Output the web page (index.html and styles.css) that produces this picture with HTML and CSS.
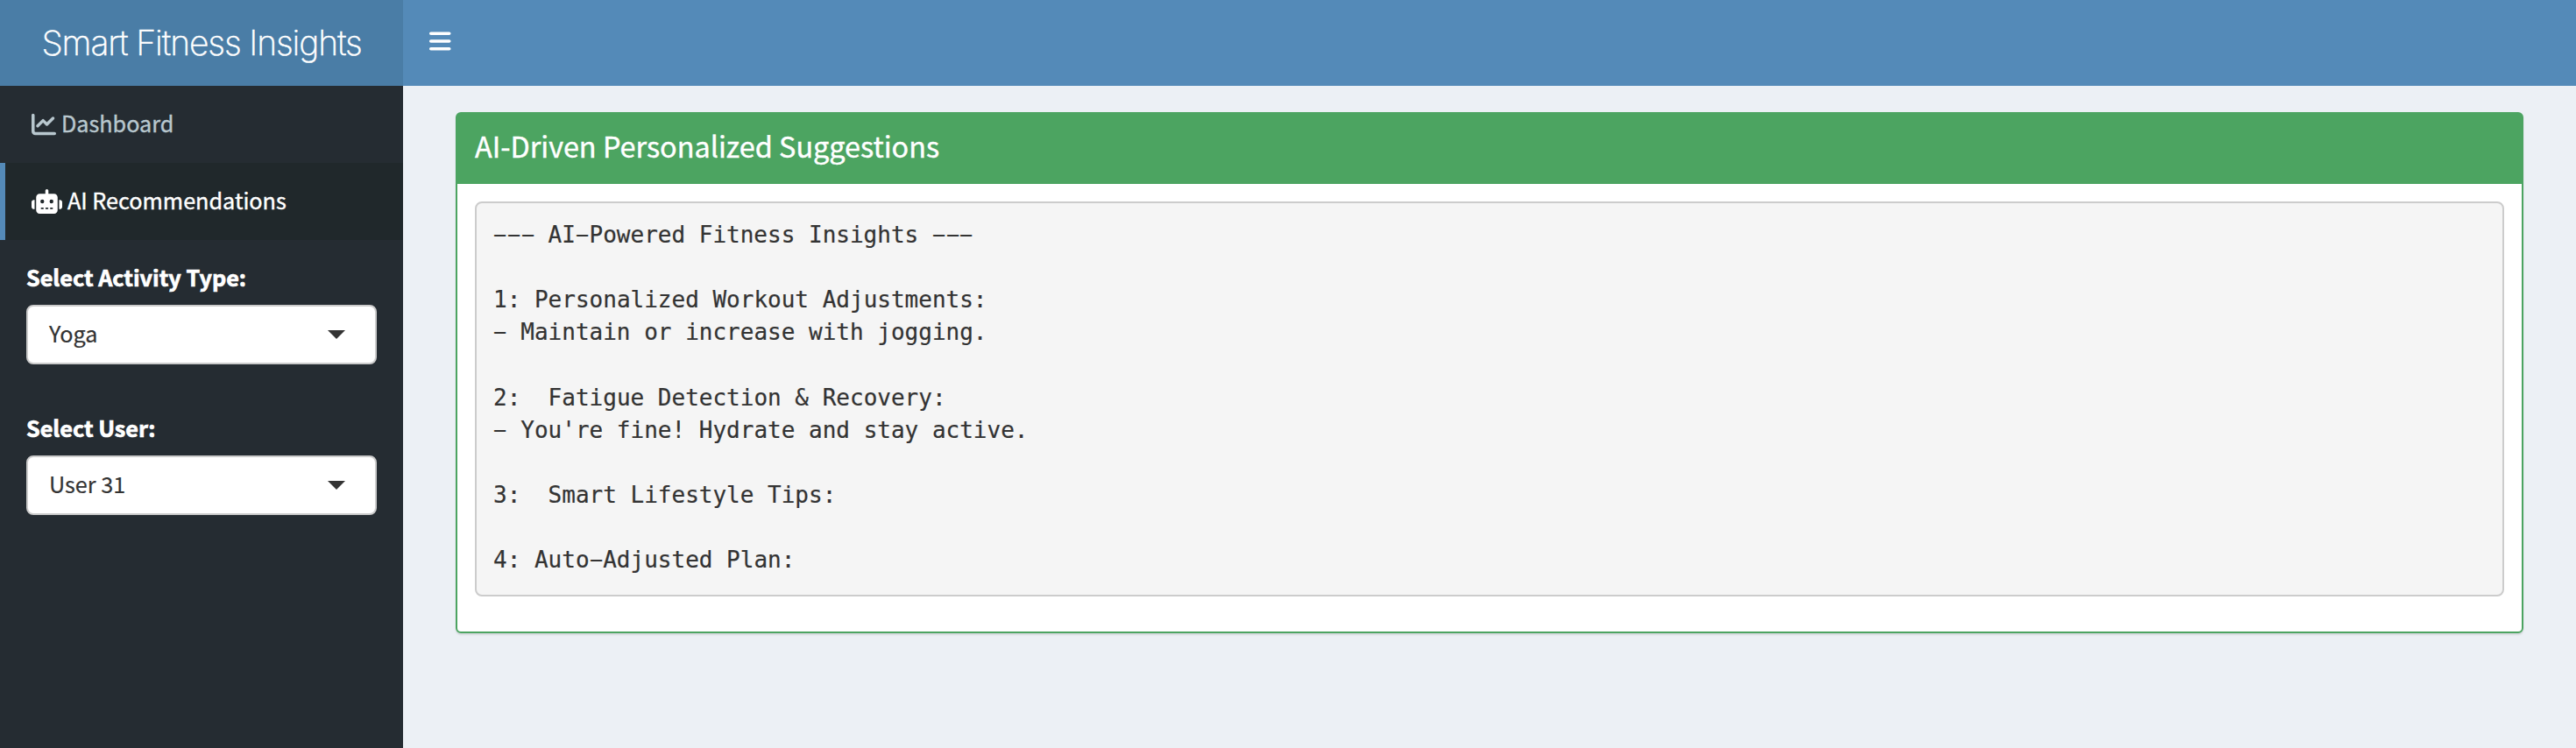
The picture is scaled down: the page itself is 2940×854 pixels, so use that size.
FILE: index.html
```html
<!DOCTYPE html>
<html lang="en">
<head>
<meta charset="utf-8">
<title>Smart Fitness Insights</title>
<link rel="stylesheet" href="styles.css">
</head>
<body>
<div class="wrapper">
  <header class="main-header">
    <div class="logo"><span class="logo-text">Smart Fitness Insights</span></div>
    <nav class="navbar">
      <svg class="icon-bars" viewBox="0 0 448 512"><path d="M0 96C0 78.3 14.3 64 32 64H416c17.7 0 32 14.3 32 32s-14.3 32-32 32H32C14.3 128 0 113.7 0 96zM0 256c0-17.7 14.3-32 32-32H416c17.7 0 32 14.3 32 32s-14.3 32-32 32H32c-17.7 0-32-14.3-32-32zM448 416c0 17.7-14.3 32-32 32H32c-17.7 0-32-14.3-32-32s14.3-32 32-32H416c17.7 0 32 14.3 32 32z"/></svg>
    </nav>
  </header>
  <div class="page">
    <aside class="sidebar">
      <div class="menu-item">
        <svg class="icon-chart" viewBox="0 0 512 512"><path d="M64 64c0-17.7-14.3-32-32-32S0 46.300 0 64V400c0 44.200 35.800 80 80 80H480c17.700 0 32-14.300 32-32s-14.300-32-32-32H80c-8.800 0-16-7.200-16-16V64zm406.600 86.600c12.500-12.500 12.500-32.800 0-45.300s-32.800-12.500-45.300 0L320 210.700l-57.400-57.400c-12.500-12.500-32.800-12.500-45.300 0l-112 112c-12.500 12.500-12.500 32.800 0 45.300s32.800 12.500 45.300 0L240 221.300l57.400 57.400c12.500 12.500 32.800 12.500 45.300 0l128-128z"/></svg>
        <span class="menu-text">Dashboard</span>
      </div>
      <div class="menu-item active">
        <svg class="icon-robot" viewBox="0 0 640 512"><path d="M320 0c17.700 0 32 14.300 32 32V96H472c39.800 0 72 32.200 72 72V440c0 39.800-32.200 72-72 72H168c-39.800 0-72-32.200-72-72V168c0-39.800 32.200-72 72-72H288V32c0-17.700 14.300-32 32-32zM208 384c-8.800 0-16 7.200-16 16s7.200 16 16 16h32c8.800 0 16-7.200 16-16s-7.200-16-16-16H208zm96 0c-8.800 0-16 7.200-16 16s7.200 16 16 16h32c8.800 0 16-7.200 16-16s-7.200-16-16-16H304zm96 0c-8.800 0-16 7.200-16 16s7.200 16 16 16h32c8.800 0 16-7.200 16-16s-7.200-16-16-16H400zM264 256a40 40 0 1 0 -80 0 40 40 0 1 0 80 0zm152 40a40 40 0 1 0 0-80 40 40 0 1 0 0 80zM48 224H64V416H48c-26.500 0-48-21.500-48-48V272c0-26.500 21.500-48 48-48zm544 0c26.500 0 48 21.500 48 48v96c0 26.500-21.500 48-48 48H576V224h16z"/></svg>
        <span class="menu-text">AI Recommendations</span>
      </div>
      <div class="field">
        <div class="label">Select Activity Type:</div>
        <div class="select"><span>Yoga</span><i class="caret"></i></div>
      </div>
      <div class="field">
        <div class="label">Select User:</div>
        <div class="select"><span>User 31</span><i class="caret"></i></div>
      </div>
    </aside>
    <main class="content">
      <section class="box">
        <h3 class="box-header"><span>AI-Driven Personalized Suggestions</span></h3>
        <div class="box-body">
<pre class="output"><b class="dash">-</b><b class="dash">-</b><b class="dash">-</b> AI<b class="dash">-</b>Powered Fitness Insights <b class="dash">-</b><b class="dash">-</b><b class="dash">-</b>

1: Personalized Workout Adjustments:
<b class="dash">-</b> Maintain or increase with jogging.

2:  Fatigue Detection &amp; Recovery:
<b class="dash">-</b> You're fine! Hydrate and stay active.

3:  Smart Lifestyle Tips:

4: Auto<b class="dash">-</b>Adjusted Plan:</pre>
        </div>
      </section>
    </main>
  </div>
</div>
</body>
</html>
```

FILE: styles.css
```css
* { box-sizing: border-box; }
body {
  margin: 0;
  font-family: "Noto Sans CJK SC", "Noto Sans", sans-serif;
  font-size: 25.2px;
  color: #333;
  background: #ecf0f5;
  -webkit-text-stroke: 0.4px currentColor;
}
svg { display: block; fill: currentColor; flex: none; }
.wrapper { display: flex; flex-direction: column; height: 854px; overflow: hidden; }
.main-header { display: flex; height: 98px; flex: none; color: #fff; }
.logo {
  display: flex; align-items: center; justify-content: center;
  width: 460px; height: 98px;
  background: #4a7da6;
}
.logo-text {
  font-family: Inter, "Liberation Sans", sans-serif;
  font-weight: 200; font-size: 39px; line-height: 98px;
  letter-spacing: -1.1px; white-space: nowrap;
  -webkit-text-stroke-width: 0.5px;
}
.navbar { flex: 1; background: #548ab8; padding: 33px 30px; }
.icon-bars { width: 24.5px; height: 28px; }
.page { display: flex; flex: 1; }
.sidebar { width: 460px; background: #252c32; color: #fff; flex: none; }
.menu-item {
  display: flex; align-items: center; gap: 6px;
  height: 88px; padding-left: 30px;
  border-left: 6px solid transparent;
  color: #b8c7ce;
}
.menu-item.active { background: #20282b; border-left-color: #548ab8; color: #fff; }
.menu-text { line-height: 40px; padding-bottom: 4px; white-space: nowrap; }
.icon-chart { width: 28px; height: 28px; margin-bottom: 1px; }
.icon-robot { width: 35px; height: 28px; }
.field { padding: 22px 30px 30px; height: 172px; }
.label {
  font-weight: 700; line-height: 40px; margin-bottom: 12px; white-space: nowrap;
  -webkit-text-stroke-width: 0.7px;
}
.select {
  display: flex; align-items: center; justify-content: space-between;
  height: 68px; padding: 0 34px 0 24px;
  background: #fff; border: 2px solid #ccc; border-radius: 8px;
  color: #333;
}
.select span { padding-bottom: 4px; -webkit-text-stroke-width: 0.2px; }
.caret {
  border: 10px solid transparent;
  border-top-color: #333; border-bottom-width: 0;
}
.content { flex: 1; padding: 30px 60px; background: #ecf0f5; }
.box {
  height: 595px;
  border: 2px solid #4ca461; border-radius: 6px;
  background: #fff; box-shadow: 0 2px 2px rgba(0, 0, 0, .1);
}
.box-header {
  margin: 0; height: 80px; padding: 0 20px;
  background: #4ca461; color: #fff;
  font-weight: 400; font-size: 32.4px; line-height: 71px;
}
.box-body { padding: 20px; }
.output {
  margin: 0; padding: 18px 19px 20px;
  border: 2px solid #ccc; border-radius: 8px;
  background: #f5f5f5; color: #333;
  font-family: "DejaVu Sans Mono", monospace;
  font-size: 26px; line-height: 37.143px;
  -webkit-text-stroke-width: 0.2px;
}
/* wide hyphen that fills one monospace cell */
.dash {
  display: inline-block;
  width: 0.276em;
  margin: 0 0.163em;
  font-family: Roboto, sans-serif;
  font-weight: 400;
  line-height: 1;
  transform: scaleX(2.05);
}
```
